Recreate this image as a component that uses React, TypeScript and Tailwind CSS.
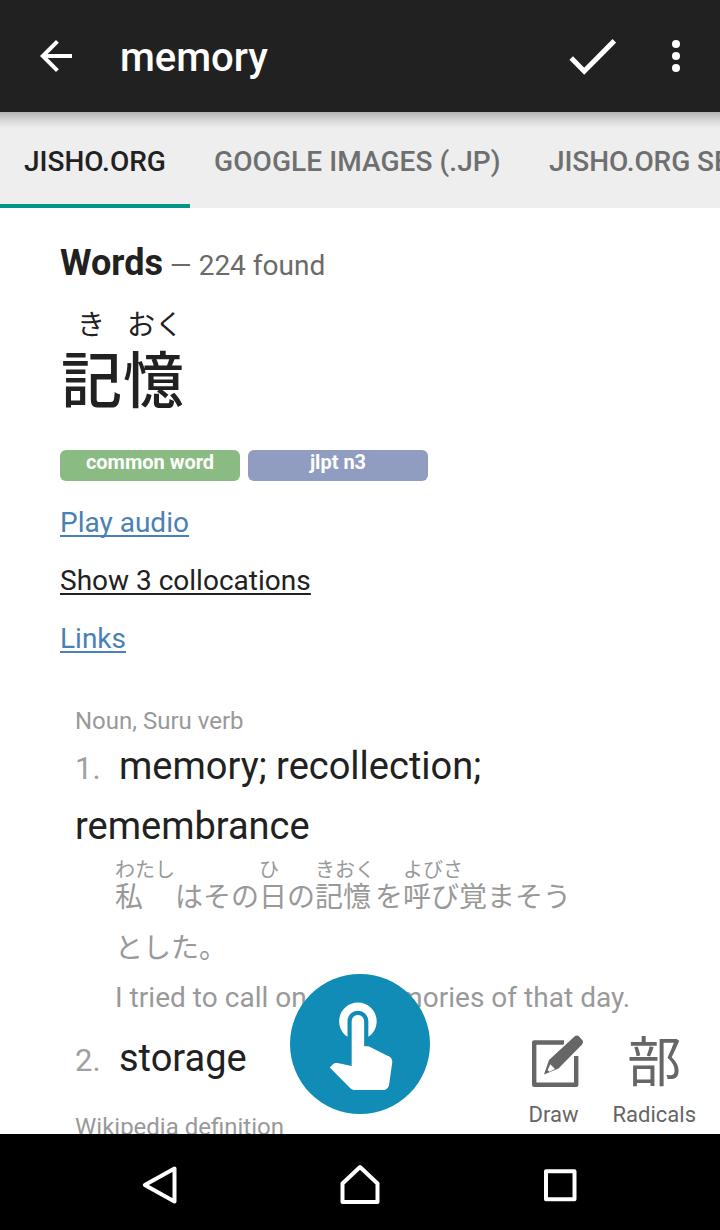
import React from "react";

type Segment = { base: string; ruby?: string; width: string };

const sentence: Segment[] = [
  { base: "私", ruby: "わたし", width: "w-[60px]" },
  { base: "はその", width: "w-[84px]" },
  { base: "日", ruby: "ひ", width: "w-7" },
  { base: "の", width: "w-7" },
  { base: "記憶", ruby: "きおく", width: "w-[60px]" },
  { base: "を", width: "w-7" },
  { base: "呼び覚", ruby: "よびさ", width: "w-[84px]" },
  { base: "まそう", width: "w-[84px]" },
];

const jp = "font-['Noto_Sans_CJK_JP','Roboto',sans-serif]";

function AppBar() {
  return (
    <header className="flex h-28 shrink-0 items-center bg-[#212121] pl-8 text-white">
      <svg className="size-12" viewBox="0 0 24 24" fill="currentColor">
        <path d="M20 11H7.83l5.59-5.59L12 4l-8 8 8 8 1.41-1.41L7.83 13H20v-2z" />
      </svg>
      <h1 className="ml-10 flex-1 pt-[4px] text-[40px] leading-[60px] font-medium">memory</h1>
      <svg className="h-10 w-12" viewBox="0 0 48 40" fill="none" stroke="currentColor" strokeWidth="5">
        <path d="M3.2 22 L16.2 35.2 L46.3 4.8" />
      </svg>
      <svg className="mr-5 ml-9 h-12 w-12 shrink-0" viewBox="0 0 48 48" fill="currentColor">
        <circle cx="24" cy="12" r="4" />
        <circle cx="24" cy="24" r="4" />
        <circle cx="24" cy="36" r="4" />
      </svg>
    </header>
  );
}

function Tabs() {
  return (
    <nav className="relative flex h-24 shrink-0 overflow-hidden bg-[#eeeeee] text-[28px] font-medium whitespace-nowrap text-[#6f6f6f]">
      <div className="absolute inset-x-0 top-0 h-4 bg-linear-to-b from-[#b5b5b5] via-[#d6d6d6] to-[#eeeeee]" />
      <div className="relative w-[190px] shrink-0 border-b-4 border-[#009688] pt-[26px] pl-6 leading-[48px] text-[#212121]">
        JISHO.ORG
      </div>
      <div className="relative w-[335px] shrink-0 pt-[26px] pl-6 leading-[48px] tracking-[0.08px]">
        GOOGLE IMAGES (.JP)
      </div>
      <div className="relative shrink-0 pt-[26px] pl-6 leading-[48px] tracking-[-0.08px]">JISHO.ORG SENTENCES</div>
    </nav>
  );
}

function Entry() {
  return (
    <section className="flex flex-col pt-[27px] pl-[60px]">
      <h2 className="h-14 text-4xl leading-[56px] font-bold whitespace-nowrap">
        Words <span className="-ml-0.5 text-[28px] font-normal text-[#6a6a6a]">— 224 found</span>
      </h2>
      <div className={`mt-3 flex h-10 text-[28px] leading-10 ${jp}`}>
        <span className="w-[62px] text-center">き</span>
        <span className="w-[66px] text-center">おく</span>
      </div>
      <div className={`mt-0.5 h-16 pl-px text-[61px] leading-[64px] font-medium tracking-[1px] ${jp}`}>記憶</div>
      <div className="mt-[41px] flex gap-2 text-center text-xl leading-[24px] font-bold text-white">
        <span className="h-[31px] w-[180px] rounded-md bg-[#8abb83]">common word</span>
        <span className="h-[31px] w-[180px] rounded-md bg-[#909cc0]">jlpt n3</span>
      </div>
      <div className="mt-[13px] flex flex-col items-start text-[28px] leading-[58px] underline decoration-2 underline-offset-[3px] [text-decoration-skip-ink:none]">
        <a className="text-[#4a81b4]">Play audio</a>
        <a>Show 3 collocations</a>
        <a className="text-[#4a81b4]">Links</a>
      </div>
    </section>
  );
}

function Meanings() {
  return (
    <section className="flex flex-col pt-[38px] pl-[75px] whitespace-nowrap">
      <p className="text-2xl leading-[30px] text-[#999]">Noun, Suru verb</p>
      <div className="text-[38px] leading-[60px]">
        <p className="flex h-[60px] items-baseline">
          <span className="w-[44px] text-[31px] leading-none text-[#a0a0a0]">1.</span>memory; recollection;
        </p>
        <p>remembrance</p>
      </div>
      <div className={`flex pl-[40px] text-[#999] ${jp}`}>
        {sentence.map((s, i) => (
          <span key={i} className={`flex flex-col ${s.width}`}>
            <span className="h-[23px] text-xl leading-[25px]">{s.ruby}</span>
            <span className="text-[28px] leading-8">{s.base}</span>
          </span>
        ))}
      </div>
      <p className={`pl-[40px] text-[28px] leading-[70px] text-[#999] ${jp}`}>とした。</p>
      <p className="pl-[40px] text-[28px] leading-[34px] tracking-[0.03px] text-[#999]">
        I tried to call on my memories of that day.
      </p>
      <p className="mt-[13px] flex h-[60px] items-baseline text-[38px] leading-[60px]">
        <span className="w-[44px] text-[31px] leading-none text-[#a0a0a0]">2.</span>storage
      </p>
      <p className="mt-6 text-2xl leading-[30px] text-[#999]">Wikipedia definition</p>
    </section>
  );
}

function InputTools() {
  return (
    <div className="absolute right-[24px] bottom-[3px] flex gap-[34px] text-[22px] leading-8 text-[#666]">
      <button className="flex w-[50px] flex-col items-center">
        <svg className="ml-[7px] h-[64px] w-[54px]" viewBox="0 0 54 64" fill="none">
          <path d="M34 7.5H4.2V49.7H46.2V21" stroke="#666" strokeWidth="4.4" strokeLinejoin="round" />
          <path
            d="M14 39.5L19 25L44.5 1.5Q47 -.5 49.5 2L52 4.8Q54 7 52 9.5L28.5 33.5Z"
            fill="#666"
            stroke="white"
            strokeWidth="3"
            paintOrder="stroke"
          />
          <path d="M20.3 29.2L25 34L19.4 36.7L17.7 35Z" fill="white" />
        </svg>
        Draw
      </button>
      <button className="flex flex-col items-center">
        <span className={`h-[64px] text-[54px] leading-[48px] ${jp}`}>部</span>
        Radicals
      </button>
    </div>
  );
}

function TouchButton() {
  return (
    <button className="absolute bottom-5 left-[290px] flex size-[140px] justify-center rounded-full bg-[#118cb6] pt-4 text-white">
      <svg className="size-[100px]" viewBox="0 0 24 24" fill="currentColor">
        <path d="M9 11.24V7.5C9 6.12 10.12 5 11.5 5S14 6.12 14 7.5v3.74c1.21-.81 2-2.18 2-3.74C16 5.01 13.99 3 11.5 3S7 5.01 7 7.5c0 1.56.79 2.93 2 3.74zm9.84 4.63l-4.54-2.26c-.17-.07-.35-.11-.54-.11H13v-6c0-.83-.67-1.5-1.5-1.5S10 6.67 10 7.5v10.74l-3.43-.72c-.08-.01-.15-.03-.24-.03-.31 0-.59.13-.79.33l-.79.8 4.94 4.94c.27.27.65.44 1.06.44h6.79c.75 0 1.33-.55 1.44-1.28l.75-5.27c.01-.07.02-.14.02-.2 0-.62-.38-1.16-.91-1.38z" />
      </svg>
    </button>
  );
}

function SystemBar() {
  return (
    <footer className="flex h-24 shrink-0 items-center justify-center gap-[152px] bg-black text-white">
      <svg className="size-12" viewBox="0 0 48 48" fill="none" stroke="currentColor" strokeWidth="4" strokeLinejoin="round">
        <path d="M38.7 10.8L9 27.2L38.7 43.8Z" transform="translate(-.2 -.3)" />
      </svg>
      <svg className="size-12" viewBox="0 0 48 48" fill="none" stroke="currentColor" strokeWidth="4" strokeLinejoin="round">
        <path d="M24 9L41.5 25.5V44H6.5V25.5Z" />
      </svg>
      <svg className="size-12" viewBox="0 0 48 48" fill="none" stroke="currentColor" strokeWidth="4" strokeLinejoin="round">
        <rect x="10" y="13.3" width="28.5" height="28" />
      </svg>
    </footer>
  );
}

export default function App() {
  return (
    <div className="flex h-[1230px] w-[720px] flex-col overflow-hidden bg-white font-['Roboto',sans-serif] text-[#212121]">
      <AppBar />
      <Tabs />
      <main className="relative min-h-0 flex-1 overflow-hidden">
        <Entry />
        <Meanings />
        <InputTools />
        <TouchButton />
      </main>
      <SystemBar />
    </div>
  );
}
